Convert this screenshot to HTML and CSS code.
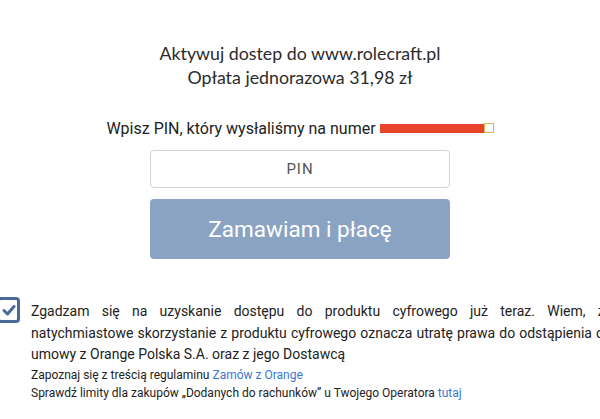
FILE: index.html
```html
<!DOCTYPE html>
<html lang="pl">
<head>
<meta charset="utf-8">
<link rel="stylesheet" href="styles.css">
</head>
<body>
<div class="page">
  <div class="top">
    <h1 class="title">Aktywuj dostep do www.rolecraft.pl<br>Opłata jednorazowa 31,98 zł</h1>
    <p class="pin-info">Wpisz PIN, który wysłaliśmy na numer <span class="redact"></span><span class="redact-box"></span></p>
    <div class="pin-field">PIN</div>
    <button class="submit">Zamawiam i płacę</button>
  </div>
  <div class="consent">
    <div class="checkbox">
      <svg width="14" height="12" viewBox="0 0 14 12"><path d="M2 6.5 L5.5 10 L12 2.5" fill="none" stroke="#4a6b98" stroke-width="3" stroke-linecap="round" stroke-linejoin="round"/></svg>
    </div>
    <div class="consent-text">
      <p class="main">Zgadzam się na uzyskanie dostępu do produktu cyfrowego już teraz. Wiem, że natychmiastowe skorzystanie z produktu cyfrowego oznacza utratę prawa do odstąpienia od umowy z Orange Polska S.A. oraz z jego Dostawcą</p>
      <p class="small">Zapoznaj się z treścią regulaminu <a href="#">Zamów z Orange</a></p>
      <p class="small">Sprawdź limity dla zakupów „Dodanych do rachunków” u Twojego Operatora <a href="#">tutaj</a></p>
    </div>
  </div>
</div>
</body>
</html>
```
FILE: styles.css
```css
html, body {
  margin: 0;
  padding: 0;
  background: #fff;
  overflow: hidden;
}
.page {
  width: 600px;
  height: 419px;
  overflow: hidden;
}
.top {
  display: flex;
  flex-direction: column;
  align-items: center;
  padding-top: 41px;
}
.title {
  margin: 0;
  font-family: Lato, sans-serif;
  font-weight: 400;
  font-size: 17.8px;
  line-height: 24px;
  color: #2b2b2b;
  text-align: center;
}
.pin-info {
  margin: 30px 0 0;
  font-family: Roboto, sans-serif;
  font-size: 16px;
  line-height: 20px;
  color: #222;
}
.redact {
  display: inline-block;
  width: 104px;
  height: 9px;
  background: #e8432b;
  vertical-align: 1px;
}
.redact-box {
  display: inline-block;
  width: 8px;
  height: 8px;
  border: 1px solid #e2b653;
  background: #fff;
  vertical-align: 1px;
}
.pin-field {
  box-sizing: border-box;
  margin-top: 11px;
  width: 300px;
  height: 38px;
  border: 1px solid #d3d3d3;
  border-radius: 4px;
  display: flex;
  align-items: center;
  justify-content: center;
  font-family: Roboto, sans-serif;
  font-size: 15px;
  letter-spacing: 1px;
  color: #555;
}
.submit {
  margin-top: 11px;
  width: 300px;
  height: 60px;
  border: 0;
  border-radius: 4px;
  background: #8aa3c3;
  color: #fff;
  font-family: Roboto, sans-serif;
  font-size: 22.5px;
  padding: 0;
}
.consent {
  display: flex;
  align-items: flex-start;
  margin-top: 37px;
  margin-left: -3px;
  width: 640px;
}
.checkbox {
  flex: none;
  box-sizing: border-box;
  width: 23px;
  height: 26px;
  border: 3px solid #4a6b98;
  border-radius: 4px;
  display: flex;
  align-items: center;
  justify-content: center;
  margin-top: 1px;
}
.consent-text {
  margin-left: 11px;
  width: 581px;
  font-family: Roboto, sans-serif;
  color: #222;
  padding-top: 5px;
}
.main {
  margin: 0;
  font-size: 14px;
  line-height: 21.5px;
  text-align: justify;
}
.small {
  margin: 0;
  font-size: 12px;
  line-height: 18.5px;
}
.small a {
  color: #3b78d0;
  text-decoration: none;
}
```
